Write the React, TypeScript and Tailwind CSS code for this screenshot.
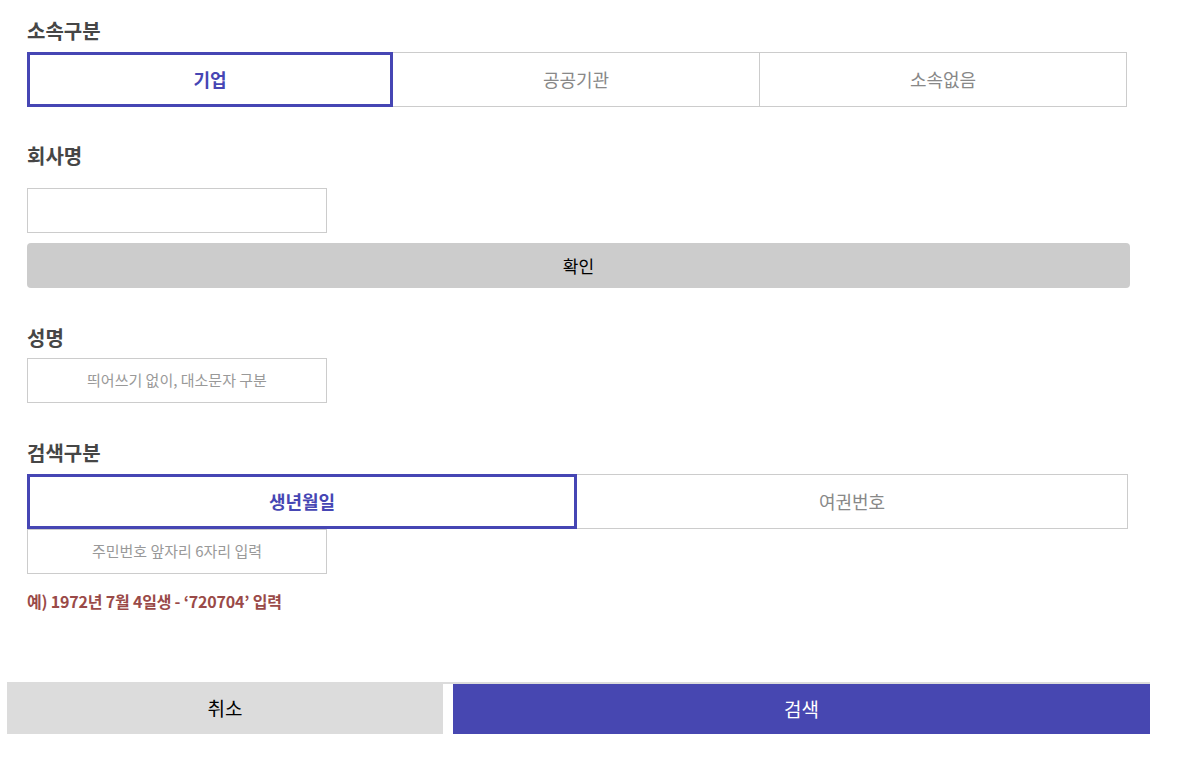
import React from "react";

const font = { fontFamily: '"Noto Sans CJK KR", "Noto Sans", sans-serif' };

function Label({ children, className = "" }: { children: React.ReactNode; className?: string }) {
  return <div className={`text-[20px] font-bold text-[#464646] leading-[22px] ${className}`}>{children}</div>;
}

export default function App() {
  return (
    <div className="bg-white w-[1193px] h-[770px] relative" style={font}>
      <div className="pl-[27px] pt-[20px]">
        <Label>소속구분</Label>
        <div className="flex w-[1100px] h-[55px] mt-[10px]">
          <button className="w-[366px] border-[3px] border-[#4646b4] text-[#4646b4] font-bold text-[18px] flex items-center justify-center">기업</button>
          <button className="w-[367px] border-y border-r border-[#cccccc] text-[#888888] text-[18px] flex items-center justify-center">공공기관</button>
          <button className="w-[367px] border-y border-r border-[#cccccc] text-[#888888] text-[18px] flex items-center justify-center">소속없음</button>
        </div>

        <Label className="mt-[38px]">회사명</Label>
        <div className="mt-[21px] w-[300px] h-[45px] border border-[#cccccc]"></div>
        <button className="mt-[10px] w-[1103px] h-[45px] bg-[#cccccc] rounded-[4px] text-[17px] text-black flex items-center justify-center">확인</button>

        <Label className="mt-[39px]">성명</Label>
        <div className="mt-[9px] w-[300px] h-[45px] border border-[#cccccc] flex items-center justify-center text-[15px] text-[#999999]">띄어쓰기 없이, 대소문자 구분</div>

        <Label className="mt-[39px]">검색구분</Label>
        <div className="flex w-[1101px] h-[55px] mt-[10px]">
          <button className="w-[550px] border-[3px] border-[#4646b4] text-[#4646b4] font-bold text-[18px] flex items-center justify-center">생년월일</button>
          <button className="w-[551px] border-y border-r border-[#cccccc] text-[#888888] text-[18px] flex items-center justify-center">여권번호</button>
        </div>
        <div className="w-[300px] h-[45px] border border-[#cccccc] flex items-center justify-center text-[15px] text-[#999999]">주민번호 앞자리 6자리 입력</div>
        <div className="mt-[17px] text-[16px] font-bold text-[#9a4a48] leading-[20px] tracking-[-0.2px]">예) 1972년 7월 4일생 - ‘720704’ 입력</div>
      </div>

      <div className="absolute left-0 right-0 top-[682px]">
        <div className="ml-[7px] w-[1143px] h-[52px] border-t-2 border-[#dcdcdc] flex gap-[10px]">
          <button className="w-[436px] -mt-[2px] h-[52px] bg-[#dcdcdc] text-[19px] text-black flex items-center justify-center">취소</button>
          <button className="flex-1 h-[50px] bg-[#4747b1] text-[19px] text-white flex items-center justify-center">검색</button>
        </div>
      </div>
    </div>
  );
}
